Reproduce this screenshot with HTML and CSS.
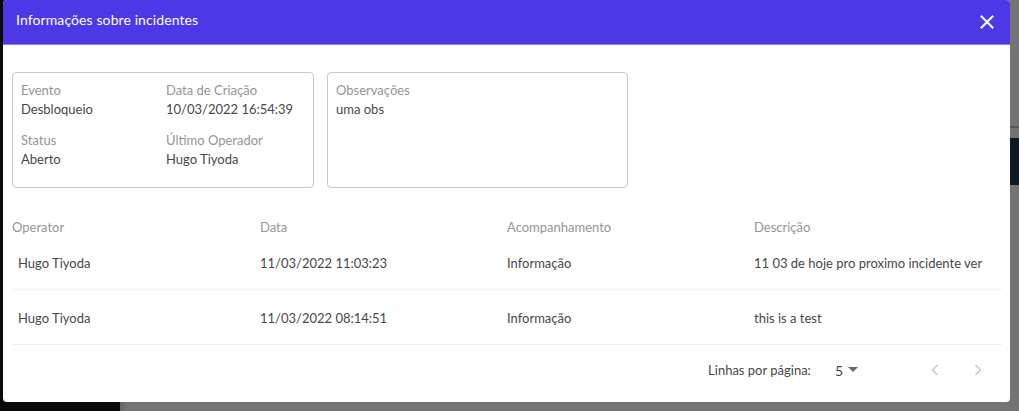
FILE: index.html
```html
<!DOCTYPE html>
<html lang="pt">
<head>
<meta charset="utf-8">
<link rel="stylesheet" href="styles.css">
</head>
<body>
<div class="stage">
  <div class="modal">
    <div class="modal-header">
      <span class="title">Informações sobre incidentes</span>
      <button class="close" aria-label="Fechar">
        <svg width="14" height="14" viewBox="0 0 14 14"><path d="M1.5 1.5 L12.5 12.5 M12.5 1.5 L1.5 12.5" stroke="#fff" stroke-width="2" stroke-linecap="square" fill="none"/></svg>
      </button>
    </div>
    <div class="modal-body">
      <div class="cards">
        <div class="card card-info">
          <div class="field"><div class="label">Evento</div><div class="value">Desbloqueio</div></div>
          <div class="field"><div class="label">Data de Criação</div><div class="value">10/03/2022 16:54:39</div></div>
          <div class="field"><div class="label">Status</div><div class="value">Aberto</div></div>
          <div class="field"><div class="label">Último Operador</div><div class="value">Hugo Tiyoda</div></div>
        </div>
        <div class="card card-obs">
          <div class="field"><div class="label">Observações</div><div class="value">uma obs</div></div>
        </div>
      </div>
      <div class="table">
        <div class="row head">
          <div class="cell">Operator</div>
          <div class="cell">Data</div>
          <div class="cell">Acompanhamento</div>
          <div class="cell">Descrição</div>
        </div>
        <div class="row body-row">
          <div class="cell first">Hugo Tiyoda</div>
          <div class="cell">11/03/2022 11:03:23</div>
          <div class="cell">Informação</div>
          <div class="cell">11 03 de hoje pro proximo incidente ver</div>
        </div>
        <div class="row body-row">
          <div class="cell first">Hugo Tiyoda</div>
          <div class="cell">11/03/2022 08:14:51</div>
          <div class="cell">Informação</div>
          <div class="cell">this is a test</div>
        </div>
      </div>
      <div class="pager">
        <span class="pager-label">Linhas por página:</span>
        <span class="pager-select">5
          <svg width="10" height="6" viewBox="0 0 10 6"><path d="M0 0 L10 0 L5 5 Z" fill="#6a6a6a"/></svg>
        </span>
        <span class="pager-nav prev">
          <svg width="8" height="12" viewBox="0 0 8 12"><path d="M6.5 1 L1.5 6 L6.5 11" stroke="#c9c9c9" stroke-width="1.4" fill="none"/></svg>
        </span>
        <span class="pager-nav next">
          <svg width="8" height="12" viewBox="0 0 8 12"><path d="M1.5 1 L6.5 6 L1.5 11" stroke="#c9c9c9" stroke-width="1.4" fill="none"/></svg>
        </span>
      </div>
    </div>
  </div>
</div>
</body>
</html>
```

FILE: styles.css
```css
html, body {
  margin: 0;
  padding: 0;
}
body {
  width: 1019px;
  height: 411px;
  overflow: hidden;
  font-family: "Lato", "Noto Sans", sans-serif;
  background:
    linear-gradient(to bottom, transparent 126px, #5a5a5a 126px, #5a5a5a 128px, transparent 128px, transparent 138px, #0b1a24 138px, #0b1a24 185px, transparent 185px) right top / 9px 100% no-repeat,
    linear-gradient(to right, #0a0a0a 0, #0a0a0a 120px, #666 120px, #6f6f6f 125px, #747474 125px);
}
.stage {
  padding-left: 3px;
}
.modal {
  width: 1007px;
  height: 402px;
  background: #fff;
  border-radius: 4px;
  overflow: hidden;
  display: flex;
  flex-direction: column;
}
.modal-header {
  height: 44px;
  background: #4d38e8;
  border-bottom: 1px solid #8d80f0;
  display: flex;
  align-items: center;
  justify-content: space-between;
  padding: 0 16px 0 13px;
  flex-shrink: 0;
}
.title {
  color: #fff;
  font-size: 14px;
  letter-spacing: 0.1px;
  margin-top: -6px;
}
.close {
  background: none;
  border: 0;
  padding: 0;
  width: 14px;
  height: 14px;
  display: flex;
  cursor: pointer;
}
.modal-body {
  padding: 27px 8px 0 9px;
}
.cards {
  display: flex;
  gap: 13px;
}
.card {
  border: 1px solid #c8c8c8;
  border-radius: 4px;
  box-sizing: border-box;
  height: 116px;
  padding: 8px 8px 0 8px;
}
.card-info {
  width: 302px;
  display: grid;
  grid-template-columns: 145px 1fr;
  grid-auto-rows: 50px;
  align-content: start;
}
.card-obs {
  width: 301px;
}
.label {
  color: #959595;
  font-size: 13px;
  line-height: 19px;
}
.value {
  color: #474747;
  font-size: 13px;
  line-height: 19px;
}
.table {
  width: 990px;
}
.row {
  display: grid;
  grid-template-columns: 248px 247px 247px 248px;
  font-size: 13px;
}
.head .cell {
  color: #959595;
  padding-top: 30px;
  line-height: 18px;
  height: 17px;
}
.body-row {
  height: 54px;
  border-bottom: 1px solid #f0f0f0;
}
.body-row .cell {
  color: #474747;
  padding-top: 19px;
  line-height: 18px;
  white-space: nowrap;
}
.body-row .cell.first {
  padding-left: 6px;
}
.pager {
  display: flex;
  align-items: center;
  justify-content: flex-end;
  height: 18px;
  margin-top: 16px;
  font-size: 13px;
  color: #474747;
  padding-right: 20px;
}
.pager-label {
  margin-right: 24px;
}
.pager-select {
  display: flex;
  align-items: center;
  gap: 5px;
  font-size: 14px;
  margin-right: 73px;
}
.pager-nav {
  display: flex;
  width: 8px;
}
.pager-nav.next {
  margin-left: 35px;
}
```
